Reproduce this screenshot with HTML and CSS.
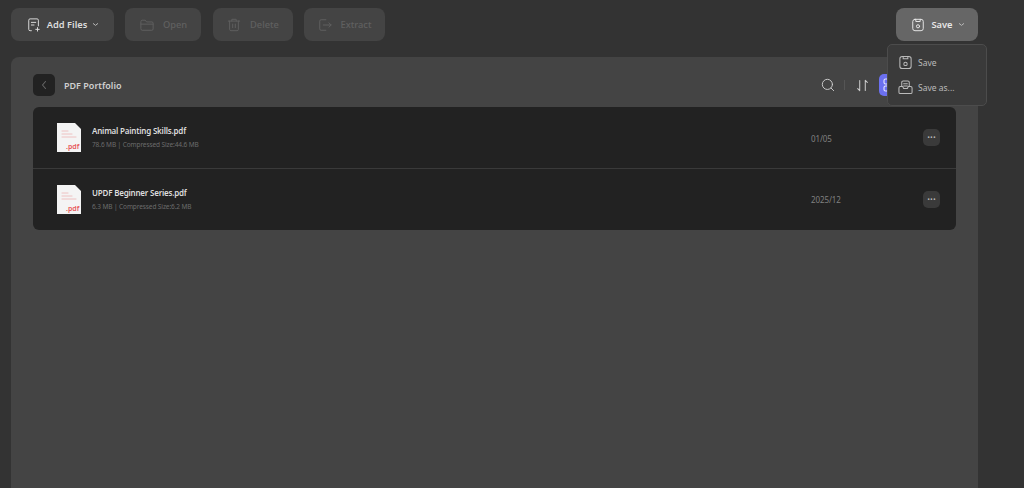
FILE: index.html
```html
<!DOCTYPE html>
<html lang="en">
<head>
    <meta charset="UTF-8">
    <meta name="viewport" content="width=device-width, initial-scale=1.0">
    <title>PDF Portfolio</title>
    <link rel="stylesheet" href="styles.css">
</head>
<body>
    <header class="toolbar">
        <button class="tool tool-add">
            <svg class="tool-icon" viewBox="0 0 16 16"><path d="M5 14.500H3.500A1.500 1.500 0 0 1 2 13V2.500A1.500 1.500 0 0 1 3.500 1h8A1.500 1.500 0 0 1 13 2.500V9"/><path d="M5 5h5M5 8h3"/><path d="M12 11v4M10 13h4"/></svg>
            <span>Add Files</span>
            <svg class="caret" viewBox="0 0 8 8"><path d="M1.500 3l2.500 2 2.500-2"/></svg>
        </button>
        <button class="tool tool-off tool-open">
            <svg class="tool-icon" viewBox="0 0 16 16"><path d="M1 4a1.500 1.500 0 0 1 1.500-1.500H6L7.500 4.500h6A1.500 1.500 0 0 1 15 6v6.500a1.500 1.500 0 0 1-1.500 1.500h-11A1.500 1.500 0 0 1 1 12.500z"/><path d="M1 7h14"/></svg>
            <span>Open</span>
        </button>
        <button class="tool tool-off tool-delete">
            <svg class="tool-icon" viewBox="0 0 16 16"><path d="M1.500 3.500h13M5.500 3.500V1.500h5v2M3 3.500V13a1.500 1.500 0 0 0 1.500 1.500h7A1.500 1.500 0 0 0 13 13V3.500M6.500 7v4M9.500 7v4"/></svg>
            <span>Delete</span>
        </button>
        <button class="tool tool-off tool-extract">
            <svg class="tool-icon" viewBox="0 0 16 16"><path d="M9 2H3.500A1.500 1.500 0 0 0 2 3.500v9A1.500 1.500 0 0 0 3.500 14H9"/><path d="M6 8h9M12.500 5.500L15 8l-2.500 2.500"/></svg>
            <span>Extract</span>
        </button>
        <button class="tool tool-save">
            <svg class="tool-icon" viewBox="0 0 16 16"><rect x="2" y="1.500" width="12" height="13" rx="2.500"/><path d="M5.500 1.500v2.500h5V1.500"/><circle cx="8" cy="9.500" r="1.800"/></svg>
            <span>Save</span>
            <svg class="caret" viewBox="0 0 8 8"><path d="M1.500 3l2.500 2 2.500-2"/></svg>
        </button>
    </header>

    <main class="panel">
        <div class="panel-head">
            <button class="back">
                <svg viewBox="0 0 8 12"><path d="M5.500 2.500L2.500 6l3 3.500"/></svg>
            </button>
            <h1>PDF Portfolio</h1>
            <div class="panel-actions">
                <svg class="action-search" viewBox="0 0 16 16"><circle cx="7.300" cy="7.300" r="5.800"/><path d="M11.500 11.500l3 3"/></svg>
                <i class="divider"></i>
                <svg class="action-sort" viewBox="0 0 14 14"><path d="M4 1.500v11M1.800 10.300L4 12.500M10 12.500v-11M10 1.500l2.200 2.200"/></svg>
                <span class="action-view">
                    <svg viewBox="0 0 10 14"><rect x="1" y="1" width="6" height="5" rx="1.500"/><rect x="1" y="8" width="6" height="5" rx="1.500"/></svg>
                </span>
            </div>
        </div>

        <ul class="files">
            <li class="file">
                <svg class="pdf" viewBox="0 0 24 29">
                    <path class="pdf-sheet" d="M0 0h18l6 6v23H0z"/>
                    <path class="pdf-lines" d="M5 8h6M5 11h10M5 14h14"/>
                    <text class="pdf-label" x="9" y="25.500">.pdf</text>
                </svg>
                <div class="file-info">
                    <div class="file-name">Animal Painting Skills.pdf</div>
                    <div class="file-size">78.6 MB | Compressed Size:44.6 MB</div>
                </div>
                <div class="file-date">01/05</div>
                <button class="more">&middot;&middot;&middot;</button>
            </li>
            <li class="file">
                <svg class="pdf" viewBox="0 0 24 29">
                    <path class="pdf-sheet" d="M0 0h18l6 6v23H0z"/>
                    <path class="pdf-lines" d="M5 8h6M5 11h10M5 14h14"/>
                    <text class="pdf-label" x="9" y="25.500">.pdf</text>
                </svg>
                <div class="file-info">
                    <div class="file-name">UPDF Beginner Series.pdf</div>
                    <div class="file-size">6.3 MB | Compressed Size:6.2 MB</div>
                </div>
                <div class="file-date">2025/12</div>
                <button class="more">&middot;&middot;&middot;</button>
            </li>
        </ul>
    </main>

    <div class="save-menu">
        <div class="save-item">
            <svg viewBox="0 0 16 16"><rect x="2" y="1.500" width="12" height="13" rx="2.500"/><path d="M5.500 1.500v2.500h5V1.500"/><circle cx="8" cy="9.500" r="1.800"/></svg>
            <span>Save</span>
        </div>
        <div class="save-item">
            <svg viewBox="0 0 16 16"><path d="M4 7V2.500A1.500 1.500 0 0 1 5.500 1h5A1.500 1.500 0 0 1 12 2.500V7M6 4h4M6 6.500h4"/><path d="M1 8.500A1.500 1.500 0 0 1 2.500 7H5l1 2h4l1-2h2.500A1.500 1.500 0 0 1 15 8.500V13a1.500 1.500 0 0 1-1.500 1.500h-11A1.500 1.500 0 0 1 1 13z"/></svg>
            <span>Save as...</span>
        </div>
    </div>
</body>
</html>
```

FILE: styles.css
```css
* {
    box-sizing: border-box;
}

html, body {
    height: 100%;
}

body {
    font-family: 'Noto Sans', 'Open Sans', sans-serif;
    margin: 0;
    background: #333;
    color: #ddd;
    overflow: hidden;
    position: relative;
}

button {
    font-family: inherit;
    border: none;
    padding: 0;
}

svg {
    fill: none;
    stroke: currentColor;
    stroke-width: 1.1;
    stroke-linecap: round;
    stroke-linejoin: round;
}

.toolbar {
    display: flex;
    gap: 11px;
    height: 57px;
    padding: 8px 46px 0 11px;
}

.tool {
    display: flex;
    align-items: center;
    justify-content: center;
    height: 33px;
    background: #444;
    color: #ddd;
    border-radius: 8px;
    font-size: 9.300px;
    font-weight: 600;
}

.tool-icon {
    width: 14px;
    height: 14px;
    margin-right: 6px;
}

.tool-add {
    width: 103px;
    padding-left: 1px;
}

.tool-off {
    color: #606060;
    font-weight: 500;
}

.tool-off .tool-icon {
    margin-right: 9px;
}

.tool-open {
    width: 76px;
    padding-left: 1px;
}

.tool-delete {
    width: 80px;
    margin-left: 1px;
}

.tool-extract {
    width: 81px;
}

.tool-save {
    width: 82px;
    padding-left: 2px;
    margin-left: auto;
    background: #666;
    color: #e8e8e8;
}

.caret {
    width: 7px;
    height: 7px;
    margin-left: 5px;
    color: #bbb;
}

.panel {
    margin-right: 46px;
    margin-left: 11px;
    height: 431px;
    padding: 17px 22px 0;
    background: #444;
    border-radius: 8px 8px 0 0;
}

.panel-head {
    display: flex;
    align-items: center;
    height: 22px;
    margin-bottom: 11px;
}

.back {
    display: flex;
    align-items: center;
    justify-content: center;
    width: 22px;
    height: 22px;
    background: #222;
    color: #666;
    border-radius: 5px;
}

.back svg {
    width: 8px;
    height: 12px;
}

.panel-head h1 {
    margin: 0 0 0 9px;
    font-size: 9px;
    font-weight: 600;
    color: #d0d0d0;
}

.panel-actions {
    display: flex;
    align-items: center;
    margin-left: auto;
    color: #ccc;
}

.action-search {
    width: 14px;
    height: 14px;
    margin-right: 9px;
}

.divider {
    width: 1px;
    height: 10px;
    background: #555;
    margin-right: 11px;
}

.action-sort {
    width: 13px;
    height: 13px;
    margin-right: 10px;
}

.action-view {
    display: flex;
    align-items: center;
    padding-left: 4px;
    width: 44px;
    height: 22px;
    background: #6b70f0;
    color: #e6e6ff;
    border-radius: 5px;
    margin-right: 33px;
}

.action-view svg {
    width: 10px;
    height: 14px;
}

.files {
    list-style: none;
    margin: 0;
    padding: 0;
    width: 923px;
    background: #222;
    border-radius: 6px;
}

.file {
    display: flex;
    align-items: center;
    height: 61px;
    padding: 0 16px 0 24px;
}

.file + .file {
    height: 62px;
    border-top: 1px solid #3a3a3a;
}

.pdf {
    width: 24px;
    height: 29px;
    flex-shrink: 0;
    stroke: none;
}

.pdf-sheet {
    fill: #f4f4f4;
}

.pdf-lines {
    stroke: #eeb5b5;
    stroke-width: 0.8;
    fill: none;
}

.pdf-label {
    fill: #e8585a;
    font-size: 7px;
    font-weight: 600;
}

.file-info {
    margin-left: 11px;
    width: 719px;
}

.file-name {
    font-size: 8px;
    font-weight: 600;
    letter-spacing: -0.2px;
    color: #ddd;
    line-height: 12px;
}

.file-size {
    font-size: 6.500px;
    letter-spacing: -0.1px;
    color: #6c6c6c;
    line-height: 10px;
    margin-top: 3px;
}

.file-date {
    font-size: 8px;
    letter-spacing: -0.1px;
    color: #808080;
    width: 112px;
}

.file:first-child .file-date {
    padding-top: 1px;
}

.more {
    width: 17px;
    height: 17px;
    background: #3a3a3a;
    color: #bbb;
    border-radius: 5px;
    font-size: 10px;
    font-weight: 600;
    line-height: 17px;
}

.save-menu {
    position: absolute;
    left: 887px;
    top: 44px;
    width: 100px;
    height: 62px;
    padding: 5px 10px;
    background: #3a3a3a;
    border: 1px solid #4c4c4c;
    border-radius: 5px;
}

.save-item {
    display: flex;
    align-items: center;
    height: 25px;
    color: #bbb;
    font-size: 8.500px;
}

.save-item svg {
    width: 15px;
    height: 15px;
    margin-right: 5px;
}
```
